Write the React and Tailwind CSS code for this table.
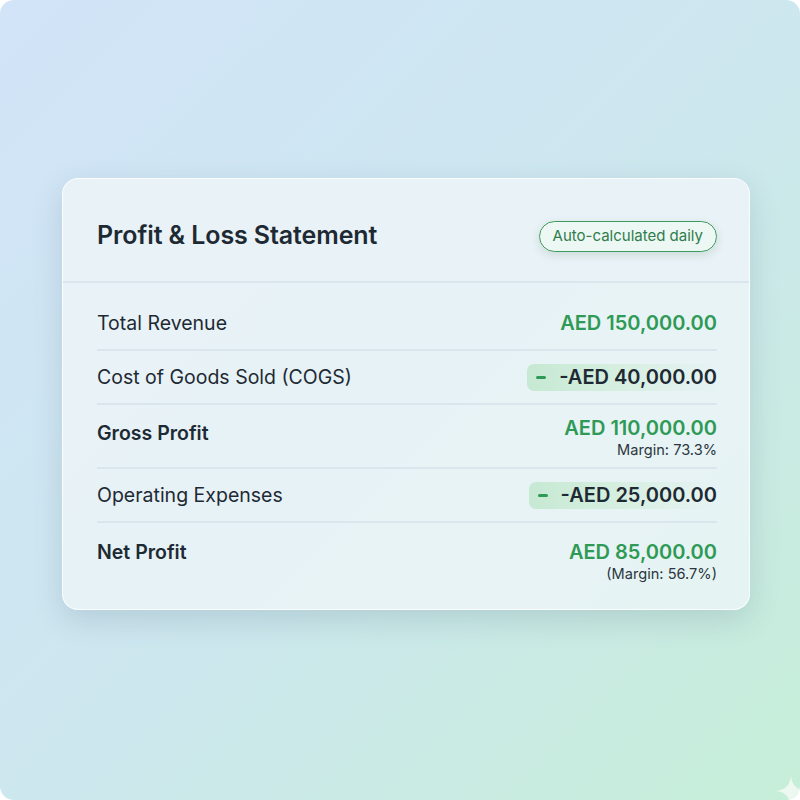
export default function App() {
  const rows = [
    { label: 'Total Revenue', value: 'AED 150,000.00', tone: 'green' },
    { label: 'Cost of Goods Sold (COGS)', value: '-AED 40,000.00', tone: 'minus' },
    { label: 'Gross Profit', value: 'AED 110,000.00', tone: 'green', bold: true, note: 'Margin: 73.3%' },
    { label: 'Operating Expenses', value: '-AED 25,000.00', tone: 'minus' },
    { label: 'Net Profit', value: 'AED 85,000.00', tone: 'green', bold: true, note: '(Margin: 56.7%)', last: true },
  ]

  return (
    <div className="w-[800px] h-[800px] bg-white" style={{ fontFamily: 'Inter, "Noto Sans", sans-serif' }}>
      <div className="relative w-full h-full rounded-[14px] overflow-hidden bg-gradient-to-br from-[#d2e4f8] via-[#cde7ef] to-[#c6eed8] pt-[178px] pl-[62px]">
        <div className="w-[688px] rounded-[16px] border border-white/80 bg-[#eef5f7]/80 shadow-[0_10px_30px_rgba(60,90,110,0.18)] overflow-hidden">
          <div className="flex items-center justify-between h-[104px] pt-[12px] pl-[34px] pr-[32px] border-b-2 border-[#dbe6ec] bg-[#e9f2f6]">
            <h1 className="text-[25px] font-semibold text-[#1e2a33] tracking-[-0.1px]">Profit &amp; Loss Statement</h1>
            <span className="h-[31px] px-[13px] flex items-center rounded-full border border-[#3f9a5f] text-[15px] text-[#2f7d4b] bg-[#eef7f2]/80 shadow-[0_3px_8px_rgba(40,90,60,0.15)]">
              Auto-calculated daily
            </span>
          </div>
          <div className="pl-[34px] pr-[32px] pt-[14px]">
            {rows.map((r) => (
              <div
                key={r.label}
                className={`flex justify-between ${r.last ? 'h-[86px] items-start pt-[17px]' : 'items-center border-b-2 border-[#dbe6ec]'} ${r.note && !r.last ? 'h-[64px]' : ''} ${!r.note ? 'h-[54px]' : ''}`}
              >
                <span className={`text-[19.5px] text-[#1e2a33] leading-[25px] ${r.bold ? 'font-semibold' : ''} ${r.note && !r.last ? 'mb-[6px]' : ''}`}>{r.label}</span>
                {r.tone === 'minus' ? (
                  <span className="flex items-center h-[27px] pl-[9px] rounded-[7px] bg-gradient-to-r from-[#c6e9d3] via-[#d7efe1] to-transparent">
                    <span className="w-[10px] h-[3px] rounded bg-[#2e9a55] mr-[13px]" />
                    <span className="text-[20px] font-semibold text-[#1e2a33]">{r.value}</span>
                  </span>
                ) : (
                  <div className={`flex flex-col items-end ${r.note && !r.last ? 'pt-[4px]' : ''}`}>
                    <span className="text-[20px] font-semibold text-[#2e9a55] leading-[25px]">{r.value}</span>
                    {r.note && <span className="text-[14.6px] text-[#2b3640] leading-[19px]">{r.note}</span>}
                  </div>
                )}
              </div>
            ))}
          </div>
        </div>
        <svg className="absolute right-[-6px] bottom-[-6px]" width="30" height="30" viewBox="0 0 30 30">
          <path d="M15 0 C16 9 21 14 30 15 C21 16 16 21 15 30 C14 21 9 16 0 15 C9 14 14 9 15 0 Z" fill="#ecf8f0" />
        </svg>
      </div>
    </div>
  )
}
